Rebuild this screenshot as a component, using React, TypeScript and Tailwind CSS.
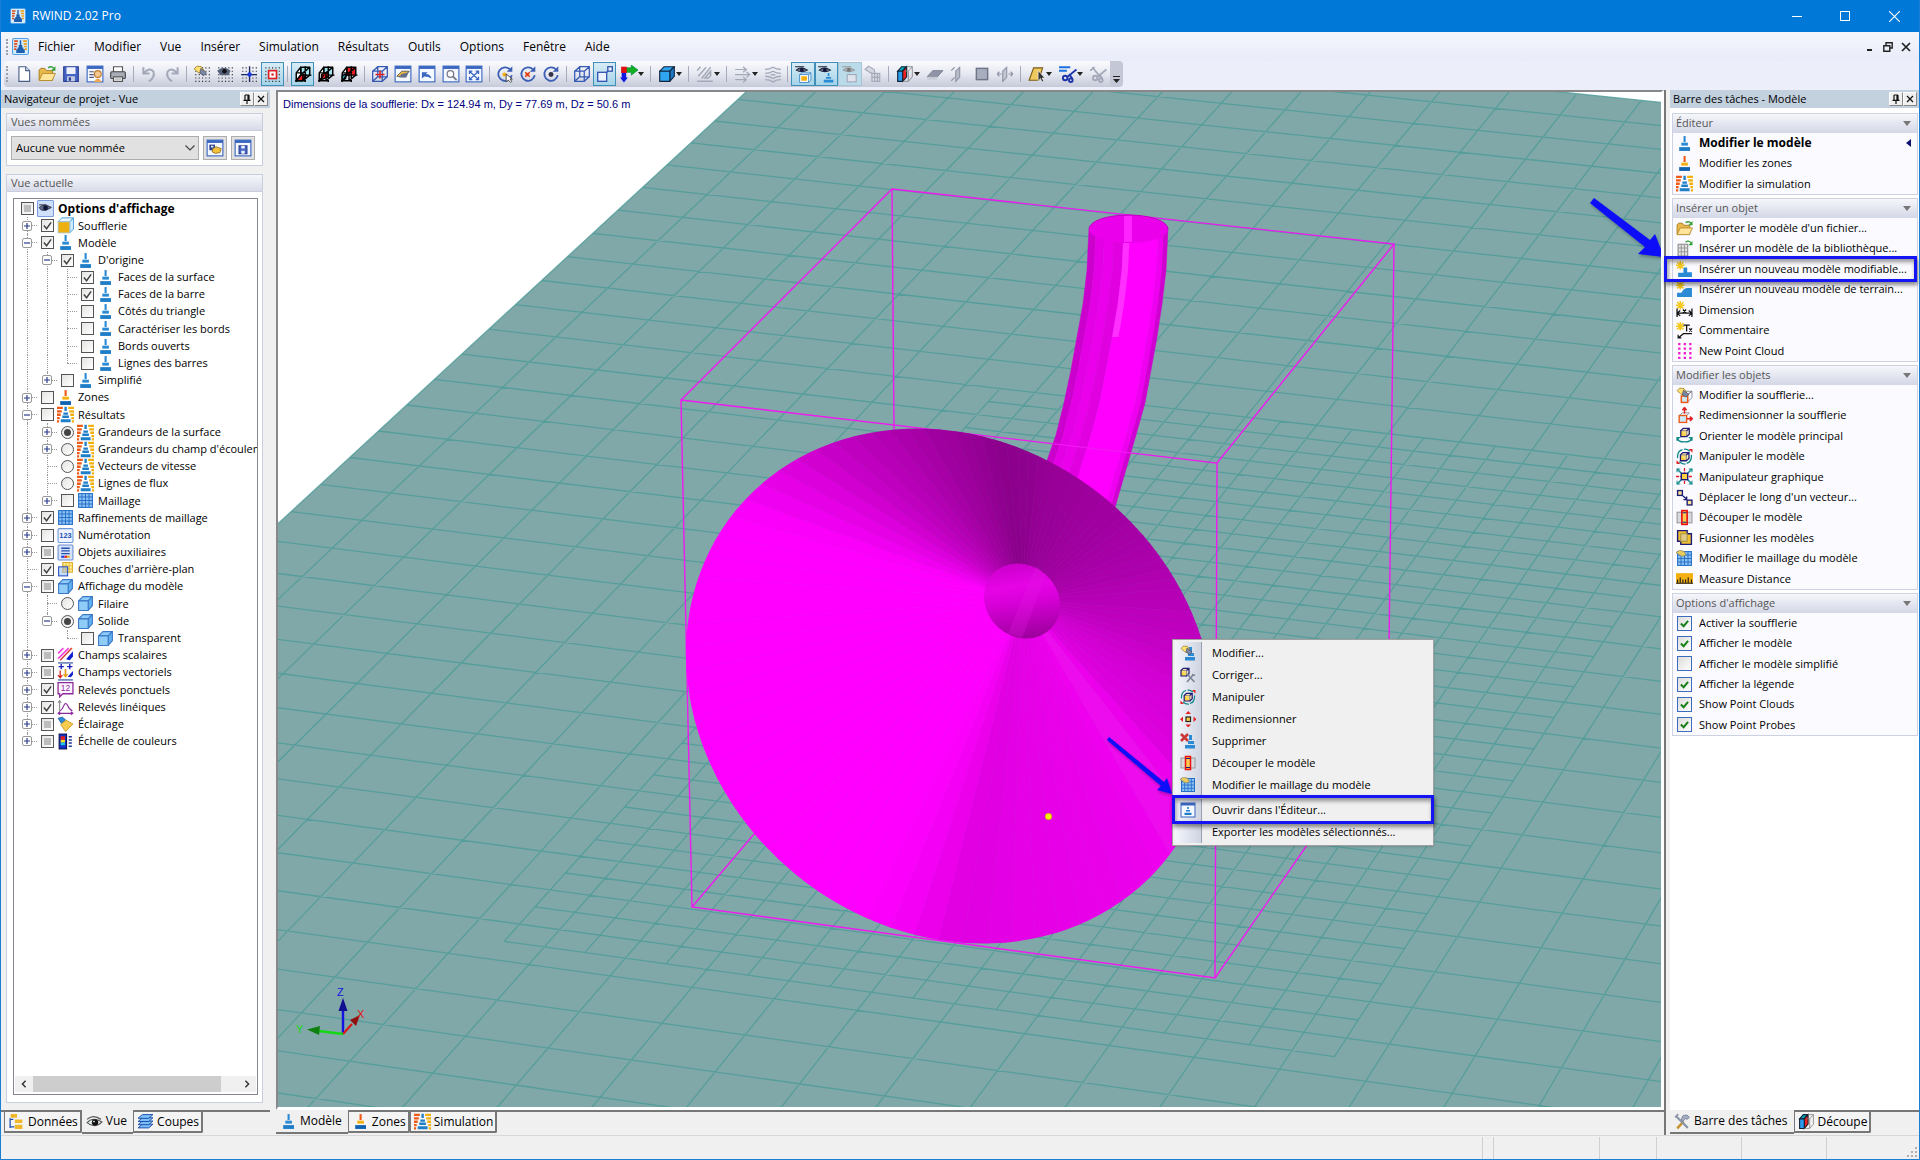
import { ReactNode } from "react";
import clsx from "clsx";

type State = "on" | "off" | "mixed";

type TreeItem = {
    level: number;
    toggle?: "+" | "-";
    radio?: boolean;
    state: State;
    icon: string;
    label: string;
};

/* ---------- icon building blocks, all on a 16 x 16 grid ---------- */

function Tower({ top = "#2a8ad4", mid = "#2a8ad4", base = "#1f7ec8" }) {
    return (
        <>
            <rect x="7.1" y="1" width="2" height="5.6" fill={top} />
            <path d="M5 10V7.200h6.200V10z" fill={mid} />
            <path d="M3 15v-3.600h10.200V15z" fill={base} />
        </>
    );
}

function Cube({ fill = "#8fcdf8", side = "#5fb0ec", line = "#3a78c8" }) {
    return (
        <g stroke={line} strokeWidth="1" strokeLinejoin="round">
            <path d="M1.5 5.5 5.5 1.5h9l-4 4z" fill={fill} />
            <path d="M10.5 5.5l4-4v8.5l-4 4.5z" fill={side} />
            <path d="M1.5 5.5h9v9h-9z" fill={fill} />
        </g>
    );
}

function Win({ children }: { children?: ReactNode }) {
    return (
        <>
            <rect x="1" y="1" width="14" height="14" fill="#f4f8ff" stroke="#3a66c0" />
            <rect x="1" y="1" width="14" height="2.5" fill="#3a66c0" />
            {children}
        </>
    );
}

function Dots() {
    return (
        <path
            d="M2 2.5h13M2 5.5h13M2 8.5h13M2 11.5h13M2 14.5h13"
            stroke="#333"
            strokeWidth="1"
            strokeDasharray="1 2"
        />
    );
}

function Hand() {
    return (
        <g strokeWidth=".6">
            <path d="M1 3.5 3.5 1l4 .5L10 5 7.5 8 4.5 6.5z" fill="#ffe070" stroke="#8a6a10" />
            <path d="M7 3l5 4-2.5 2.5L6 7z" fill="#7a88a8" stroke="#445" />
        </g>
    );
}

function Eye({ grey = false }) {
    return (
        <g>
            <path d="M1 1.500h8M2 4.500Q6 1 12 4.500q-5 3-10 0z" fill={grey ? "#a8aebb" : "#6b7590"} stroke={grey ? "#999" : "#223"} strokeWidth=".9" />
            <circle cx="7" cy="4.400" r="1.700" fill={grey ? "#777" : "#0c1440"} />
        </g>
    );
}

function Spark() {
    return (
        <path
            d="M4 0v8M0 4h8M1 1l6 6M7 1 1 7"
            stroke="#f4c81c"
            strokeWidth="1.4"
        />
    );
}

function Mesh() {
    return (
        <>
            <rect x="1.5" y="1.5" width="13" height="13" fill="#8cc0f4" stroke="#2470c8" />
            <path d="M4.700 1.500v13M8 1.500v13M11.300 1.500v13M1.500 4.700h13M1.500 8h13M1.500 11.300h13" stroke="#2470c8" strokeWidth=".9" />
        </>
    );
}

function WireCube({ line = "#3558b4" }) {
    return (
        <path
            d="M1.5 5.5h8.5v9H1.5zM6 1.5h8.5v9H6zM1.5 5.5l4.5-4M10 5.5l4.5-4M1.5 14.5l4.5-4M10 14.5l4.5-4"
            fill="none"
            stroke={line}
            strokeWidth="1.1"
        />
    );
}

function Rotor({ line = "#3c5fb4" }) {
    return (
        <>
            <path d="M12.5 4A6 6 0 1 0 14 9" fill="none" stroke={line} strokeWidth="1.6" />
            <path d="M14.5 1v5h-5z" fill={line} />
        </>
    );
}

function Box3({ part }: { part: "floor" | "middle" | "front" }) {
    return (
        <g stroke="#000" strokeWidth="1.3" strokeLinejoin="round">
            <path d="M6 2h8v7H6z" fill={part === "front" ? "#e81c1c" : "#9fe4ec"} />
            <path d="M2 7l4-5v7l-4 5z" fill="#fff" />
            {part === "floor" && <path d="M2 14 6 9h5l-3.500 5z" fill="#e81c1c" />}
            {part === "middle" && <path d="M4 8.500 10 6v4.500L4 13z" fill="#e81c1c" />}
            {part === "front" && <path d="M2 9.500 5 8v4l-3 2z" fill="#19a8b8" />}
            <path d="M2 7h6l6-5M8 7v7l6-5M1 14h9M6 9 1.500 15M10 1v14M14 9h1.500" fill="none" />
        </g>
    );
}

function Cut() {
    return (
        <>
            <path d="M1.5 5.5 5 1.5h4l-3.5 4z" fill="#0ab" stroke="#123" />
            <path d="M1.5 5.5h4.5v9H1.5z" fill="#2a9cf0" stroke="#123" />
            <path d="M6 5.5l3.5-4v9L6 14.5z" fill="#f02020" stroke="#123" />
            <path d="M9.5 1.5h5v9l-3.5 4H6M11 5.5v9M14.5 1.5l-3.5 4H8" fill="none" stroke="#888" strokeWidth=".8" />
        </>
    );
}

function Scissors({ line = "#1c34a8" }) {
    return (
        <g fill="none" stroke={line} strokeWidth="1.7">
            <path d="M15.500 4 7 11M9 8l3 4.500" />
            <circle cx="5.5" cy="11.500" r="2" />
            <circle cx="10.500" cy="13.500" r="1.600" />
        </g>
    );
}

function Bars() {
    return (
        <>
            <path d="M0 1.800h5.500M0 5h4.500M0 8.200h3.500M0 11.400h2.500M0 14.400h2" stroke="#f05a14" strokeWidth="2.2" />
            <path d="M10.500 1.800H16M11.500 5H16M12.500 8.200H16M13.500 11.400H16M14 14.400h2" stroke="#f4b010" strokeWidth="2.2" />
        </>
    );
}

function TinyCube({ x = 4, y = 4 }) {
    return (
        <g transform={`translate(${x} ${y})`} stroke="#1c1c78" strokeWidth="1.2">
            <path d="M0 2.5h5.5V8H0z" fill="#ffd040" />
            <path d="M0 2.5 2.3.3H8v5.500L5.500 8M5.500 2.500 8 .3" fill="#ffe890" fillOpacity=".6" />
        </g>
    );
}

const grey = "#a3a9b8";

const icons: Record<string, ReactNode> = {
    app: (
        <>
            <rect x=".5" y=".5" width="15" height="15" rx="1.500" fill="#d4ecfb" stroke="#4f9fe4" />
            <path d="M2 3h3.500M2 5.500h3M2 8h2.500M2 10.500h2" stroke="#e04818" strokeWidth="1.600" />
            <path d="M10.500 3H14M11 5.500h3M11.500 8H14M12 10.500h2" stroke="#f09c10" strokeWidth="1.600" />
            <path d="M7.300 2h1.400v4.500h1V9h1v1.500h1.300V14H4v-3.500h1.300V9h1V6.500h1z" fill="#1e5fae" />
        </>
    ),
    file: (
        <>
            <path d="M3.500 1.500h6l3.500 3.500v9.500H3.500z" fill="#fff" stroke="#4a5f88" />
            <path d="M9.500 1.500v3.500H13" fill="#dfe6f4" stroke="#4a5f88" />
        </>
    ),
    open: (
        <>
            <path d="M1 13.500V4.500l1.500-1.500h3.500L7.500 5H13v8.500z" fill="#e8b84c" stroke="#a57716" strokeWidth=".8" />
            <path d="M1 13.800 4 7.500h11.500l-3 6.300z" fill="#ffe49a" stroke="#b58a26" strokeWidth=".8" />
            <path d="M9 2.500Q12 .5 14 3" fill="none" stroke="#35a035" strokeWidth="1.300" />
            <path d="M15.500 1v4h-4z" fill="#35a035" />
        </>
    ),
    save: (
        <>
            <path d="M1.500 1.500h13v13h-13z" fill="#4565c4" stroke="#2b3f92" />
            <rect x="4" y="2" width="8" height="6" fill="#eef2fc" />
            <rect x="4.500" y="10" width="7" height="4.500" fill="#c3cbe4" />
            <rect x="6" y="11" width="2" height="3" fill="#2b3f92" />
        </>
    ),
    preview: (
        <Win>
            <path d="M3 6h4M3 8.500h4M3 11h4" stroke="#557" />
            <circle cx="10.500" cy="8" r="3" fill="#f4c890" stroke="#c07a30" />
            <path d="M7 15q3.500-6 7 0z" fill="#f0a850" />
        </Win>
    ),
    print: (
        <>
            <path d="M4 6V1.500h8V6" fill="#fff" stroke="#555" />
            <rect x="1.500" y="6" width="13" height="6" rx="1" fill="#a8adb6" stroke="#444" />
            <path d="M4 10.500h8v4H4z" fill="#fff" stroke="#555" />
            <path d="M5 12.500h6" stroke="#888" strokeWidth=".8" />
        </>
    ),
    undo: (
        <path d="M3 2v5.500h5.500M3.500 7Q9 1.500 12 6q1.500 5-4 8.500" fill="none" stroke={grey} strokeWidth="1.800" />
    ),
    redo: (
        <path d="M13 2v5.500H7.500M12.500 7Q7 1.500 4 6q-1.500 5 4 8.500" fill="none" stroke={grey} strokeWidth="1.800" />
    ),
    gridPen: (
        <>
            <Dots />
            <Hand />
        </>
    ),
    gridEye: (
        <>
            <Dots />
            <path d="M1 5Q7 0 13 5l-2 4H4z" fill="#55607a" />
            <circle cx="7.500" cy="5.500" r="2" fill="#111" />
        </>
    ),
    gridCross: (
        <>
            <Dots />
            <path d="M8.500 1v14M1 8.500h14" stroke="#1c2a60" strokeWidth="1.200" />
            <circle cx="8.500" cy="8.500" r="2" fill="#2038e0" />
        </>
    ),
    gridSnap: (
        <>
            <Dots />
            <rect x="5" y="5" width="7" height="7" fill="#fff" stroke="#e02020" strokeWidth="1.500" />
            <rect x="7.500" y="7.500" width="2" height="2" fill="#e02020" />
        </>
    ),
    boxA: <Box3 part="floor" />,
    boxB: <Box3 part="middle" />,
    boxC: <Box3 part="front" />,
    wireRed: (
        <>
            <WireCube />
            <path d="M4 8.500h8M8 5v7" stroke="#e02020" strokeWidth="1.400" />
        </>
    ),
    winPen: (
        <Win>
            <path d="M2.500 10l4.500-4.500h6.500l-4 5z" fill="#f4c040" stroke="#555" strokeWidth=".8" />
            <path d="M6.500 8l6.500-1.500-2 4.500H4.500z" fill="#66718c" />
        </Win>
    ),
    winBack: (
        <Win>
            <path d="M3.500 12V6.500h5L7 8q4 0 5 4-3-2-6.500-1.800z" fill="#3a66c0" />
        </Win>
    ),
    winZoom: (
        <Win>
            <circle cx="7.500" cy="8" r="2.900" fill="#fff" stroke="#778" strokeWidth="1.100" />
            <path d="M9.700 10.200l3.300 3.300" stroke="#778" strokeWidth="1.600" />
        </Win>
    ),
    winFit: (
        <Win>
            <path d="M4 5.500l8 7.500M12 5.500 4 13M4 8V5.500h2.500M9.500 5.500H12V8M12 10.500V13H9.500M6.500 13H4v-2.500" fill="none" stroke="#3a66c0" strokeWidth="1.200" />
        </Win>
    ),
    rotSel: (
        <>
            <Rotor />
            <circle cx="7.500" cy="8.500" r="1.800" fill="#f4b010" />
            <path d="M9 8v7l2-1.500 2 2 1-1-1.500-2h2z" fill="#fff" stroke="#222" strokeWidth=".7" />
        </>
    ),
    rotX: (
        <>
            <Rotor />
            <circle cx="7.500" cy="8.500" r="1.800" fill="#f4b010" />
            <path d="M5.500 6.500l4 4M9.500 6.500l-4 4" stroke="#e03020" strokeWidth="1.200" />
        </>
    ),
    rotEye: (
        <>
            <Rotor />
            <circle cx="8" cy="8.500" r="2.200" fill="#334" />
        </>
    ),
    wire: <WireCube />,
    cubeMove: (
        <g fill="#eaf3ff" stroke="#3558b4" strokeWidth="1.200">
            <rect x="1.500" y="6.500" width="8" height="8" />
            <path d="M9.500 6.500 12 4" />
            <rect x="10.500" y="1.500" width="4" height="4" />
        </g>
    ),
    axes: (
        <>
            <path d="M1.500 5h4v6H7l-3.500 4.500L0 11h1.500z" fill="#1018e0" />
            <path d="M5 2.500h5V0l6 4.500L10 9V6.500H5z" fill="#10b020" stroke="#084" strokeWidth=".6" />
            <rect x="1" y="1.500" width="5" height="5.500" fill="#e01010" />
        </>
    ),
    solidCube: <Cube fill="#2fa4f0" side="#1c78c8" line="#12243c" />,
    hatch: (
        <path d="M2 10 9 2M5 12 13 2M1 5l3-3.500M8 11.500l5-6v4l-2 2zM1 14.500h14" fill="none" stroke={grey} strokeWidth="1.300" />
    ),
    flows: (
        <path d="M1 4h10M8 1.500 11 4 8 6.500M1 8.500h13M11 6l3 2.500L11 11M1 13h10M8 10.500l3 2.500-3 2.500" fill="none" stroke={grey} strokeWidth="1.100" />
    ),
    waves: (
        <path d="M1 4q4 0 7-2 3 2 7 2M1 7.500q4 0 7-2 3 2 7 2M1 10q4 0 7 2 3-2 7-2M1 13q4 0 7 2 3-2 7-2M6 8.700h4" fill="none" stroke={grey} strokeWidth="1.200" />
    ),
    eyeBox: (
        <>
            <Eye />
            <path d="M5 8.500h8v7H5zM13 8.500l2-1.500v6.500l-2 2M5 8.500l2-1.500h8" fill="#fff" stroke="#3a86c8" strokeWidth=".8" />
            <rect x="6.500" y="10" width="5" height="4" fill="#f4b010" />
        </>
    ),
    eyeTower: (
        <>
            <Eye />
            <path d="M9.500 7h1.500v3H9.500zM8 10.700h4.500v1.500H8zM6 13h8.500v2.500H6z" fill="#2a8ad4" />
        </>
    ),
    eyeGrey: (
        <>
            <Eye grey />
            <rect x="5.500" y="8.500" width="8" height="6.500" fill="#dfe4ec" stroke={grey} />
        </>
    ),
    handGrey: (
        <g fill="#d4d8e2" stroke={grey}>
            <path d="M1 4 4 1l5 3 1 4-4-1z" />
            <rect x="7" y="7.500" width="7" height="7" />
            <path d="M9.500 7.500v7M12 7.500v7M7 11h7" />
        </g>
    ),
    cut: <Cut />,
    planeA: (
        <>
            <path d="M1 10.500 6 5h9l-5 5.500z" fill="#8f95a6" stroke="#777d90" strokeWidth=".8" />
            <path d="M1 10.500h9V13H1z" fill="#c6cad6" />
        </>
    ),
    planeB: <path d="M6 5.500 9.500 2v9L6 14.500zM2 5l3-3M2 14l3-3" fill="#b8bdca" stroke="#8f95a6" />,
    planeC: <rect x="3" y="3" width="10" height="10" fill="#a9aebf" stroke="#6f7588" strokeWidth="1.300" />,
    planeD: <path d="M6 5.500 9.500 2v9L6 14.500zM1 8h4M15 8h-4M1 8l2-2M1 8l2 2M15 8l-2-2M15 8l-2 2" fill="#c3c7d2" stroke="#8f95a6" />,
    sheet: (
        <>
            <path d="M1 13.500 5 2.500h8L9.500 13.500z" fill="#f0c860" stroke="#7a5c14" />
            <path d="M9 5v9l2-2 1.500 3 1.500-.8-1.500-2.700H15z" fill="#333" stroke="#fff" strokeWidth=".5" />
        </>
    ),
    cutLines: (
        <>
            <path d="M0 2h10M0 5.200h7" stroke="#1c70e0" strokeWidth="1.800" />
            <Scissors />
        </>
    ),
    cutGrey: (
        <>
            <path d="M3 2l9 11M1 5l4-3" stroke={grey} strokeWidth="1.500" />
            <Scissors line={grey} />
        </>
    ),
    model: <Tower />,
    zones: <Tower top="#f05a14" mid="#f4b010" base="#0f62b0" />,
    sim: (
        <>
            <Bars />
            <path d="M7 .800h2.200v4H7zM6 6h4.300v2.200H6zM5 9h6.200v2.400H5zM3.500 12.400h9.300V15.400H3.500z" fill="#1f7ec8" />
        </>
    ),
    eyeWin: (
        <>
            <rect x=".5" y=".5" width="15" height="15" rx="1" fill="#cfe0fb" stroke="#7c9ce0" />
            <path d="M2 4.500h7M2 7Q7 3 13.500 7 8 11 4 9.500z" fill="#66718c" stroke="#334" strokeWidth=".9" />
            <circle cx="8" cy="7.500" r="2.300" fill="#10183a" />
        </>
    ),
    tunnel: (
        <>
            <path d="M1 4.500 4.500.8h11L12 4.500z" fill="#eaf6ff" stroke="#4aa0dc" strokeWidth=".9" />
            <path d="M12 4.500 15.500.8v10.500L12 15z" fill="#d4ecfb" stroke="#4aa0dc" strokeWidth=".9" />
            <rect x="1" y="4.500" width="11" height="10.500" fill="#eeb010" stroke="#a8c8dc" strokeWidth=".8" />
        </>
    ),
    mesh: <Mesh />,
    num: (
        <>
            <rect x="1" y="1.500" width="14" height="13" rx="1" fill="#eef4ff" stroke="#6f96dc" />
            <text x="8" y="10.800" textAnchor="middle" fontSize="7" fontWeight="700" fontFamily="Liberation Sans, sans-serif" fill="#2450b0">
                123
            </text>
        </>
    ),
    aux: (
        <>
            <rect x="1" y="1" width="14" height="14" rx="1" fill="#d4e2fa" stroke="#6f8cd0" />
            <path d="M4 4h8M4 6.500h8M4 9h8" stroke="#2450b0" strokeWidth="1.200" />
            <path d="M4 12h3" stroke="#1040e0" strokeWidth="2" />
            <path d="M7 12h2.500" stroke="#e02020" strokeWidth="2" />
            <path d="M9.500 12H12" stroke="#f4b010" strokeWidth="2" />
        </>
    ),
    layers: (
        <>
            <rect x="5.500" y="1.500" width="9" height="9" fill="#fff0a0" stroke="#d8a820" />
            <path d="M8.500 1.500v9M11.500 1.500v9M5.500 4.500h9M5.500 7.500h9" stroke="#e8b830" strokeWidth=".8" />
            <rect x="1.500" y="5.500" width="8.500" height="8.500" fill="#8cb4f4" fillOpacity=".5" stroke="#2450c0" />
        </>
    ),
    cube: <Cube />,
    scalar: (
        <>
            <path d="M1 6 6 1M1 11 11 1" stroke="#f040e0" strokeWidth="1.500" />
            <path d="M3 12.500 14 1" stroke="#e04040" strokeWidth="1.500" />
            <path d="M8.500 11.500 15 4v5l-3 3.500z" fill="#1020d0" />
            <path d="M1 15h14" stroke="#1c3c90" />
        </>
    ),
    vector: (
        <>
            <path d="M4 0v5M1.500 2.500h5M12 0v5M9.500 2.500h5" stroke="#2020c0" strokeWidth="1.300" />
            <path d="M3 6v7M1 10.500 3 13l2-2.500M8 5v6" fill="none" stroke="#d02020" strokeWidth="1.200" />
            <path d="M8 5v7M6 9.500 8 12l2-2.500" fill="none" stroke="#e8a010" strokeWidth="1.300" />
            <path d="M10 12 15 6.500V10l-2 2.500z" fill="#1020d0" />
            <path d="M1 15h14" stroke="#1c3c90" />
        </>
    ),
    probe: (
        <>
            <path d="M1 1.500h14v10.500H5.500l-3 3v-3H1z" fill="#fdf4ff" stroke="#8c2a9c" strokeWidth="1.200" />
            <text x="8" y="9.800" textAnchor="middle" fontSize="8" fontFamily="Liberation Sans, sans-serif" fill="#8c2a9c">
                12
            </text>
        </>
    ),
    curve: (
        <>
            <path d="M2.500 12V2M1 3.500 2.500 1.500 4 3.500" fill="none" stroke="#888" />
            <path d="M3 11q2-1 3.500-5Q8 2.500 10 6q1.500 4 4.500 5" fill="none" stroke="#8c2a9c" strokeWidth="1.100" />
            <path d="M1 13.500h14M3 12l-2 1.500L3 15M13 12l2 1.500L13 15" fill="none" stroke="#8c2a9c" />
        </>
    ),
    light: (
        <>
            <path d="M1 2l3 5 4-3.500L5 1z" fill="#2a8ad4" stroke="#18508c" strokeWidth=".6" />
            <path d="M3.500 8 8.500 4 15 7.500 8 14.500z" fill="#f8cc50" stroke="#c89420" strokeWidth=".8" />
        </>
    ),
    scale: (
        <>
            <rect x="2" y="1" width="7" height="14" fill="#1030c8" />
            <rect x="3.500" y="3" width="4" height="3.500" fill="#e02020" />
            <rect x="3.500" y="6.500" width="4" height="2.500" fill="#f8e020" />
            <rect x="3.500" y="9" width="4" height="2.500" fill="#20c8e0" />
            <rect x="2" y="1" width="7" height="14" fill="none" stroke="#101050" />
            <path d="M11 3.500h3M11 6.500h3M11 9.500h3M11 12.500h3" stroke="#223a90" strokeWidth="1.400" />
        </>
    ),
    library: (
        <>
            <path d="M2 4h9v11H2z" fill="#e4e4e4" stroke="#888" />
            <path d="M2 7.500h9M2 11h9M5 4v11M8 4v11" stroke="#999" />
            <path d="M9 2Q12 0 14 2.500" fill="none" stroke="#35a035" strokeWidth="1.200" />
            <path d="M15.500 1v4h-4z" fill="#35a035" />
        </>
    ),
    newModel: (
        <>
            <path d="M7 6h3.500v4.500H15V15H2v-4h5z" fill="#2a8ad4" />
            <Spark />
        </>
    ),
    terrain: (
        <>
            <path d="M1 15v-4h4q2-4 5.500-4.500H15V15z" fill="#2a8ad4" />
            <Spark />
        </>
    ),
    dimension: (
        <>
            <Spark />
            <path d="M1 7v8M15 7v8M1 11.500h14M4 9l-3 2.500L4 14M12 9l3 2.500-3 2.500M6.500 8l3 3M9.500 8l-3 3" fill="none" stroke="#111" strokeWidth="1.200" />
        </>
    ),
    comment: (
        <>
            <Spark />
            <path d="M7 3h6M10 3v6M12.500 6l2.500 3M15 6l-2.500 3" stroke="#111" strokeWidth="1.200" />
            <path d="M15 11H7l-5 4M2 12v3h3" fill="none" stroke="#111" strokeWidth="1.100" />
        </>
    ),
    points: (
        <path d="M2 2h13M2 6.300h13M2 10.600h13M2 14.900h13" stroke="#f020d0" strokeWidth="2.200" strokeDasharray="2.200 3" />
    ),
    editTunnel: (
        <>
            <path d="M6 7h5v7H6zM9 4h6l-4 3zM11 7l4-3v6l-4 4" fill="#fff" stroke="#778" strokeWidth=".8" />
            <rect x="5" y="8.500" width="6" height="6" fill="#cde8f8" stroke="#f05a14" strokeWidth="1.400" />
            <Hand />
        </>
    ),
    sizeTunnel: (
        <>
            <rect x="3" y="8" width="7" height="6.500" fill="#cde8f8" stroke="#f05a14" strokeWidth="1.300" />
            <path d="M3 8l3-2.500h6.500L10 8" fill="none" stroke="#888" strokeWidth=".8" />
            <path d="M8 6V1M6 3l2-2.500L10 3M10 11h5.500M13 9l2.500 2-2.500 2" fill="none" stroke="#e02020" strokeWidth="1.400" />
        </>
    ),
    orient: (
        <>
            <TinyCube x={4.500} y={1} />
            <path d="M2 10q-1 4 6 4t6-4M12 10h3v3M1 13v-3h3" fill="none" stroke="#0f8a88" strokeWidth="1.300" />
        </>
    ),
    manip: (
        <>
            <path d="M6 1.500Q1 3 1.500 9.500M10 14.500Q15 13 14.500 6.500M3 13q3 2.500 6 2M13 3Q10 .5 7.500 1.200" fill="none" stroke="#0f8a88" strokeWidth="1.200" />
            <TinyCube x={4.200} y={4} />
            <path d="M12 1h3.500v3.500zM.5 11.500V15H4z" fill="#e02020" />
        </>
    ),
    gizmo: (
        <>
            <path d="M8 0v16M0 8h16" stroke="#e02020" strokeWidth="1.200" strokeDasharray="3 1" />
            <path d="M1 1l4 4M15 1l-4 4M1 15l4-4M15 15l-4-4" stroke="#0f8a88" strokeWidth="1.400" />
            <path d="M1 4V1h3M12 1h3v3M15 12v3h-3M4 15H1v-3" fill="none" stroke="#0f8a88" />
            <rect x="5" y="5" width="6" height="6" fill="#ffd040" stroke="#1c1c78" strokeWidth="1.300" />
        </>
    ),
    along: (
        <>
            <rect x="1.500" y="1.500" width="4.500" height="4.500" fill="#ffe890" stroke="#1c1c78" strokeWidth="1.300" />
            <rect x="10.500" y="10.500" width="4.500" height="4.500" fill="#ffe890" stroke="#1c1c78" strokeWidth="1.300" />
            <path d="M6.500 6.500l3.500 3M10 7v3H7" fill="none" stroke="#1c1c78" strokeWidth="1.300" />
        </>
    ),
    split: (
        <>
            <rect x="1" y="3" width="14" height="10" fill="#d8dade" stroke="#999" />
            <rect x="5.500" y="1.500" width="5" height="13" fill="#ffc850" stroke="#e81010" strokeWidth="1.500" />
            <path d="M6 3.500h4M6 12.500h4" stroke="#1c1c78" />
        </>
    ),
    merge: (
        <>
            <path d="M1.500 1.500h9v3h4v10h-10v-3h-3z" fill="#f0c030" stroke="#1c1c78" strokeWidth="1.300" />
            <rect x="4.500" y="4.500" width="6" height="7" fill="#e0cc88" stroke="#a89440" />
        </>
    ),
    meshPen: (
        <>
            <Mesh />
            <path d="M0 2.500 3.500 0 8 1.500 9.500 5 5.500 6z" fill="#e8cc60" stroke="#776" strokeWidth=".6" />
        </>
    ),
    ruler: (
        <>
            <rect x="0" y="3" width="16" height="10" fill="#f4b010" />
            <path d="M0 12.500h16M1.500 9v4M4 7v6M6.500 9v4M9 9v4M11.500 7v6M14.500 9v4" stroke="#222" strokeWidth="1.100" />
        </>
    ),
    handTower: (
        <>
            <path d="M9 2h3v5H9zM8 8h6v3H8zM5 12h10v3.500H5z" fill="#2a8ad4" />
            <Hand />
        </>
    ),
    repair: (
        <>
            <TinyCube x={1} y={1} />
            <path d="M7 15l6-7M8 8l6.500 7M7 7l2.500 2.500M12 7.500l3 1" stroke="#7d8698" strokeWidth="1.700" />
        </>
    ),
    resize: (
        <>
            <rect x="6" y="6" width="4.500" height="4.500" fill="#ffd040" stroke="#222" strokeWidth="1.200" />
            <path d="M8.200 0 11 3H5.500zM8.200 16.500 11 13.500H5.500zM0 8.200 3 5.500V11zM16.500 8.200 13.500 5.500V11z" fill="#e82020" />
        </>
    ),
    remove: (
        <>
            <path d="M9 2h3v5H9zM8 8h6v3H8zM5 12h10v3.500H5z" fill="#2a8ad4" />
            <path d="M1 1l7 7M8 1 1 8" stroke="#c83838" strokeWidth="2.600" />
        </>
    ),
    editor: (
        <Win>
            <path d="M7.200 5h1.600v2H7.200zM6 8h4v1.500H6zM4.500 10.800h7v2.200h-7z" fill="#1f7ec8" />
        </Win>
    ),
    data: (
        <>
            <path d="M2 5v9M2 6h3M2 13h4" fill="none" stroke="#2450b0" strokeWidth="1.200" />
            <path d="M2.500 1h6v3.500h-6zM6.500 6h7v3.500h-7zM6.500 11h7v4h-7z" fill="#f0b828" />
        </>
    ),
    view: (
        <>
            <path d="M1 9Q7 3 15 8.500 8 15 1 9z" fill="#e8f2f4" stroke="#555" />
            <path d="M1 6Q7 1 14 6" fill="none" stroke="#555" strokeWidth="1.200" />
            <circle cx="8.500" cy="8.800" r="3" fill="#111" />
            <circle cx="7.500" cy="8" r=".8" fill="#fff" />
        </>
    ),
    slices: (
        <g fill="#7cc0fa" stroke="#1c4ca8" strokeWidth=".9">
            <path d="M1 14 5 10.500h10L11 14z" />
            <path d="M1 11 5 7.500h10L11 11z" />
            <path d="M1 8 5 4.500h10L11 8z" />
            <path d="M1 5 5 1.500h10L11 5z" />
        </g>
    ),
    tools: (
        <>
            <path d="M3 14.500 9 8" stroke="#c8902c" strokeWidth="2.400" />
            <path d="M2 3q3 3 5 5l6 6" fill="none" stroke="#8793a8" strokeWidth="2" />
            <path d="M8 3q4-2.500 6.500 1l-2 2-2-1-2 3L7 6z" fill="#a4afc4" stroke="#66708a" strokeWidth=".7" />
            <path d="M1 4l3-3" stroke="#8793a8" strokeWidth="1.500" />
        </>
    ),
    winHand: (
        <Win>
            <path d="M3 5h5v5H3z" fill="#2b3f92" />
            <path d="M4.500 6h2v1.500h-2z" fill="#fff" />
            <path d="M6 8.500 9 7l4.500 1.500-1 3.500-4 .8-3-1.300z" fill="#f4c040" stroke="#8a6a10" strokeWidth=".7" />
        </Win>
    ),
    winSave: (
        <Win>
            <path d="M4.500 6h7v7h-7z" fill="#4565c4" stroke="#2b3f92" />
            <path d="M6.500 6h3v2.500h-3zM6.500 10.500h3V13h-3z" fill="#eef2fc" />
        </Win>
    ),
};

function Icon({ name, className = "size-4" }: { name: string; className?: string }) {
    return (
        <svg viewBox="0 0 16 16" className={clsx("shrink-0", className)} aria-hidden="true">
            {icons[name]}
        </svg>
    );
}

/* ---------- menu bar and toolbar ---------- */

const menus = ["Fichier", "Modifier", "Vue", "Insérer", "Simulation", "Résultats", "Outils", "Options", "Fenêtre", "Aide"];

// "!" pressed, "~" pressed but disabled, ">" has a drop-down arrow
const toolGroups = [
    { width: "w-[118px]", tools: ["file", "open", "save", "preview", "print"] },
    { width: "w-[46px]", tools: ["undo", "redo"] },
    { width: "w-[94px]", tools: ["gridPen", "gridEye", "gridCross", "!gridSnap"] },
    { width: "w-[70px]", tools: ["!boxA", "boxB", "boxC"] },
    { width: "w-[118px]", tools: ["wireRed", "winPen", "winBack", "winZoom", "winFit"] },
    { width: "w-[70px]", tools: ["rotSel", "rotX", "rotEye"] },
    { width: "w-[77px]", tools: ["wire", "!cubeMove", ">axes"] },
    { width: "w-[31px]", tools: [">solidCube"] },
    { width: "w-[31px]", tools: [">hatch"] },
    { width: "w-[54px]", tools: [">flows", "waves"] },
    { width: "w-[94px]", tools: ["!eyeBox", "!eyeTower", "~eyeGrey", "handGrey"] },
    { width: "w-[125px]", tools: [">cut", "planeA", "planeB", "planeC", "planeD"] },
    { width: "w-[86px]", tools: [">sheet", ">cutLines", "cutGrey"] },
];

function ToolButton({ tool }: { tool: string }) {
    const mark = /^[!~>]/.test(tool) ? tool[0] : "";
    const name = tool.replace(/^[!~>]/, "");

    return (
        <button
            type="button"
            aria-label={name}
            className={clsx(
                "flex h-6 items-center justify-center border",
                mark === ">" ? "w-[31px] shrink-0" : "flex-1",
                mark === "!" && "border-[#3f8fb8] bg-linear-to-b from-[#d8edf6] to-[#a4d3e8]",
                mark === "~" && "border-[#a8c4d4] bg-[#b9dbea]",
                mark !== "!" && mark !== "~" && "border-transparent",
            )}
        >
            <Icon name={name} className="size-[18px]" />
            {mark === ">" && (
                <svg viewBox="0 0 6 4" className="h-1 w-1.5 shrink-0" aria-hidden="true">
                    <path d="M0 0h6L3 4z" fill="#222" />
                </svg>
            )}
        </button>
    );
}

function Grip() {
    return <span className="h-4 w-0.5 border-l-2 border-dotted border-[#9aa0b0]" />;
}

function TitleBar() {
    return (
        <header className="flex h-8 shrink-0 items-center bg-[#0078d7] pl-[9px] text-white">
            <Icon name="app" className="size-4" />
            <h1 className="ml-1.5 flex-1 text-[12px]">RWIND 2.02 Pro</h1>
            <button type="button" aria-label="Réduire" className="flex h-full w-12 items-center justify-center">
                <svg viewBox="0 0 10 10" className="size-2.5">
                    <path d="M0 5.500h10" stroke="#fff" />
                </svg>
            </button>
            <button type="button" aria-label="Agrandir" className="flex h-full w-12 items-center justify-center">
                <svg viewBox="0 0 10 10" className="size-2.5">
                    <rect x=".5" y=".5" width="9" height="9" fill="none" stroke="#fff" />
                </svg>
            </button>
            <button type="button" aria-label="Fermer" className="flex h-full w-[50px] items-center justify-center">
                <svg viewBox="0 0 10 10" className="size-[11px]">
                    <path d="M0 0l10 10M10 0 0 10" stroke="#fff" />
                </svg>
            </button>
        </header>
    );
}

function MenuBar() {
    return (
        <nav className="flex h-[29px] shrink-0 items-center bg-linear-to-b from-[#f4f6fd] to-[#e9ecf9] pl-[5px]">
            <Grip />
            <Icon name="app" className="ml-1 size-[17px]" />
            <div className="flex flex-1 gap-px">
                {menus.map((menu) => (
                    <button key={menu} type="button" className="px-[9px] text-[12px]">
                        {menu}
                    </button>
                ))}
            </div>
            <div className="flex gap-2 pr-2">
                <button type="button" aria-label="Réduire la vue">
                    <svg viewBox="0 0 10 10" className="size-2.5">
                        <path d="M2 8h5" stroke="#222" strokeWidth="2" />
                    </svg>
                </button>
                <button type="button" aria-label="Restaurer la vue">
                    <svg viewBox="0 0 10 10" className="size-2.5">
                        <path d="M3 3V.8h6.200V6H7M.8 3.800h6v5.400h-6z" fill="none" stroke="#222" strokeWidth="1.400" />
                    </svg>
                </button>
                <button type="button" aria-label="Fermer la vue">
                    <svg viewBox="0 0 10 10" className="size-2.5">
                        <path d="M1 1l8 8M9 1 1 9" stroke="#222" strokeWidth="1.700" />
                    </svg>
                </button>
            </div>
        </nav>
    );
}

function Toolbar() {
    return (
        <div className="flex h-[29px] shrink-0 items-start bg-[#eceefa] pl-[3px]">
            <div className="flex h-[26px] items-center rounded-l-sm bg-linear-to-b from-[#fbfbfe] via-[#e6e8f1] to-[#c6cad9] pl-0.5">
                <Grip />
                <div className="ml-1 flex">
                    {toolGroups.map((group, i) => (
                        <div key={group.tools[0]} className="flex">
                            {i > 0 && (
                                <span className="my-1 flex w-[7px] justify-center">
                                    <span className="w-px bg-[#a6abbc]" />
                                </span>
                            )}
                            <div className={clsx("flex", group.width)}>
                                {group.tools.map((tool) => (
                                    <ToolButton key={tool} tool={tool} />
                                ))}
                            </div>
                        </div>
                    ))}
                </div>
            </div>
            <button
                type="button"
                aria-label="Autres commandes"
                className="flex h-[26px] w-[13px] items-end justify-center rounded-r-sm bg-[#c3c7d6] pb-1"
            >
                <svg viewBox="0 0 7 7" className="size-[7px]">
                    <path d="M0 .5h7" stroke="#222" />
                    <path d="M0 3h7L3.500 7z" fill="#222" />
                </svg>
            </button>
        </div>
    );
}

/* ---------- shared panel parts ---------- */

function DockHeader({ title }: { title: string }) {
    return (
        <div className="flex h-[18px] shrink-0 items-center bg-[#c3d0de] pr-0.5 pl-[3px] text-[11px]">
            <h2 className="flex-1">{title}</h2>
            <button type="button" aria-label="Épingler" className="flex size-[14px] items-center justify-center border border-t-white border-r-[#888] border-b-[#888] border-l-white bg-[#f0f0f0]">
                <svg viewBox="0 0 10 10" className="size-2.5">
                    <path d="M3 1v5M7 1v5M6 1v5M3 1h4M1.500 6.300h7M5 6.500V10" fill="none" stroke="#111" strokeWidth="1.200" />
                </svg>
            </button>
            <button type="button" aria-label="Fermer" className="flex size-[14px] items-center justify-center border border-t-white border-r-[#888] border-b-[#888] border-l-white bg-[#f0f0f0]">
                <svg viewBox="0 0 8 8" className="size-2">
                    <path d="M1 1l6 6M7 1 1 7" stroke="#111" strokeWidth="1.200" />
                </svg>
            </button>
        </div>
    );
}

function CheckBox({ id, state, radio, name }: { id: string; state: State; radio?: boolean; name?: string }) {
    return (
        <span className="grid place-items-center">
            <input
                id={id}
                name={name}
                type={radio ? "radio" : "checkbox"}
                defaultChecked={state === "on"}
                ref={(el) => {
                    if (el) el.indeterminate = state === "mixed";
                }}
                className={clsx(
                    "peer size-[13px] appearance-none border border-[#555] bg-linear-to-br from-[#e4e4e2] to-white [grid-area:1/1]",
                    radio && "rounded-full",
                )}
            />
            {radio ? (
                <span className="pointer-events-none hidden size-[7px] rounded-full bg-[#444] [grid-area:1/1] peer-checked:block" />
            ) : (
                <>
                    <svg viewBox="0 0 10 10" className="pointer-events-none hidden size-[9px] [grid-area:1/1] peer-checked:block">
                        <path d="M1 5l3 3.500L9 1.500" fill="none" stroke="#444" strokeWidth="1.700" />
                    </svg>
                    <span className="pointer-events-none hidden size-[7px] bg-[#bdbdbd] [grid-area:1/1] peer-indeterminate:block" />
                </>
            )}
        </span>
    );
}

function Tab({ icon, label, active }: { icon: string; label: string; active?: boolean }) {
    return (
        <button
            type="button"
            role="tab"
            aria-selected={!!active}
            className={clsx(
                "flex items-center gap-[3px] border-[#777] text-[12px] whitespace-nowrap",
                active
                    ? "-mt-0.5 h-6 border-b-2 bg-[#f0f0f0] pr-1.5 pl-1"
                    : "h-[21px] rounded-br-xs border-r-2 border-b-2 border-l bg-[#f4f4f4] pr-0.5 pl-[3px]",
            )}
        >
            <Icon name={icon} className="size-[17px]" />
            {label}
        </button>
    );
}

/* ---------- left dock ---------- */

const tree: TreeItem[] = [
    { level: 0, state: "mixed", icon: "eyeWin", label: "Options d'affichage" },
    { level: 1, toggle: "+", state: "on", icon: "tunnel", label: "Soufflerie" },
    { level: 1, toggle: "-", state: "on", icon: "model", label: "Modèle" },
    { level: 2, toggle: "-", state: "on", icon: "model", label: "D'origine" },
    { level: 3, state: "on", icon: "model", label: "Faces de la surface" },
    { level: 3, state: "on", icon: "model", label: "Faces de la barre" },
    { level: 3, state: "off", icon: "model", label: "Côtés du triangle" },
    { level: 3, state: "off", icon: "model", label: "Caractériser les bords" },
    { level: 3, state: "off", icon: "model", label: "Bords ouverts" },
    { level: 3, state: "off", icon: "model", label: "Lignes des barres" },
    { level: 2, toggle: "+", state: "off", icon: "model", label: "Simplifié" },
    { level: 1, toggle: "+", state: "off", icon: "zones", label: "Zones" },
    { level: 1, toggle: "-", state: "off", icon: "sim", label: "Résultats" },
    { level: 2, toggle: "+", radio: true, state: "on", icon: "sim", label: "Grandeurs de la surface" },
    { level: 2, toggle: "+", radio: true, state: "off", icon: "sim", label: "Grandeurs du champ d'écoulement" },
    { level: 2, radio: true, state: "off", icon: "sim", label: "Vecteurs de vitesse" },
    { level: 2, radio: true, state: "off", icon: "sim", label: "Lignes de flux" },
    { level: 2, toggle: "+", state: "off", icon: "mesh", label: "Maillage" },
    { level: 1, toggle: "+", state: "on", icon: "mesh", label: "Raffinements de maillage" },
    { level: 1, toggle: "+", state: "off", icon: "num", label: "Numérotation" },
    { level: 1, toggle: "+", state: "mixed", icon: "aux", label: "Objets auxiliaires" },
    { level: 1, state: "on", icon: "layers", label: "Couches d'arrière-plan" },
    { level: 1, toggle: "-", state: "mixed", icon: "cube", label: "Affichage du modèle" },
    { level: 2, radio: true, state: "off", icon: "cube", label: "Filaire" },
    { level: 2, toggle: "-", radio: true, state: "on", icon: "cube", label: "Solide" },
    { level: 3, state: "off", icon: "cube", label: "Transparent" },
    { level: 1, toggle: "+", state: "mixed", icon: "scalar", label: "Champs scalaires" },
    { level: 1, toggle: "+", state: "mixed", icon: "vector", label: "Champs vectoriels" },
    { level: 1, toggle: "+", state: "on", icon: "probe", label: "Relevés ponctuels" },
    { level: 1, toggle: "+", state: "on", icon: "curve", label: "Relevés linéiques" },
    { level: 1, toggle: "+", state: "mixed", icon: "light", label: "Éclairage" },
    { level: 1, toggle: "+", state: "mixed", icon: "scale", label: "Échelle de couleurs" },
];

// true when another item of this level follows before the branch closes
function continues(index: number, level: number) {
    for (let i = index + 1; i < tree.length; i++) {
        if (tree[i].level < level) return false;
        if (tree[i].level === level) return true;
    }
    return false;
}

function TreeRow({ item, index }: { item: TreeItem; index: number }) {
    const id = `tree-${index}`;
    const group = item.icon === "cube" ? "rendu" : "resultat";

    return (
        <li className="flex min-h-0 items-center whitespace-nowrap">
            {Array.from({ length: item.level }, (_, i) => i + 1).map((level) => {
                const own = level === item.level;
                const more = continues(index, level);
                return (
                    <span key={level} className="grid h-full w-5 shrink-0 place-items-center">
                        {(own || more) && (
                            <span
                                className={clsx(
                                    "w-px self-start border-l border-dotted border-[#999] [grid-area:1/1]",
                                    more ? "h-full" : "h-1/2",
                                )}
                            />
                        )}
                        {own && (
                            <span className="w-2.5 justify-self-end border-t border-dotted border-[#999] [grid-area:1/1]" />
                        )}
                        {own && item.toggle && (
                            <button
                                type="button"
                                aria-label={item.toggle === "+" ? "Développer" : "Réduire"}
                                className="size-[10px] rounded-xs border border-[#999] bg-white [grid-area:1/1]"
                            >
                                <svg viewBox="0 0 8 8" className="size-2">
                                    <path d={item.toggle === "+" ? "M1 4h6M4 1v6" : "M1 4h6"} stroke="#2a3c8c" strokeWidth="1.200" />
                                </svg>
                            </button>
                        )}
                    </span>
                );
            })}
            <span className="flex w-5 shrink-0 justify-center">
                <CheckBox id={id} state={item.state} radio={item.radio} name={item.radio ? group : undefined} />
            </span>
            <Icon name={item.icon} className="size-[17px]" />
            <label htmlFor={id} className={clsx("pl-1", item.level === 0 && "text-[12px] font-bold")}>
                {item.label}
            </label>
        </li>
    );
}

function Navigator() {
    return (
        <aside className="flex w-[269px] shrink-0 flex-col">
            <DockHeader title="Navigateur de projet - Vue" />
            <div className="flex min-h-0 flex-1 flex-col gap-2 pt-[5px] pr-[7px] pb-[7px] pl-[5px] text-[11px]">
                <section className="border border-[#c8cede] bg-white">
                    <h3 className="h-[17px] border-b border-[#c8cede] bg-linear-to-b from-[#f6f7fb] to-[#d8dbe8] pl-1 leading-4 text-[#555]">
                        Vues nommées
                    </h3>
                    <div className="flex items-center gap-1 px-1 py-[5px]">
                        <div className="grid flex-1 items-center">
                            <select
                                aria-label="Vues nommées"
                                className="h-6 appearance-none border border-[#adadad] bg-[#e1e1e1] pl-1 text-[11px] [grid-area:1/1]"
                            >
                                <option>Aucune vue nommée</option>
                            </select>
                            <svg viewBox="0 0 10 6" className="pointer-events-none mr-1 h-1.5 w-2.5 justify-self-end [grid-area:1/1]">
                                <path d="M.5.5 5 5 9.500.5" fill="none" stroke="#444" strokeWidth="1.200" />
                            </svg>
                        </div>
                        <button type="button" aria-label="Gérer les vues" className="flex size-6 items-center justify-center border border-[#adadad] bg-[#e1e1e1]">
                            <Icon name="winHand" className="size-[18px]" />
                        </button>
                        <button type="button" aria-label="Enregistrer la vue" className="mr-[3px] flex size-6 items-center justify-center border border-[#adadad] bg-[#e1e1e1]">
                            <Icon name="winSave" className="size-[18px]" />
                        </button>
                    </div>
                </section>
                <section className="flex min-h-0 flex-1 flex-col border border-[#c8cede] bg-white">
                    <h3 className="h-[17px] shrink-0 border-b border-[#c8cede] bg-linear-to-b from-[#f6f7fb] to-[#d8dbe8] pl-1 leading-4 text-[#555]">
                        Vue actuelle
                    </h3>
                    <div className="mt-1.5 mr-1 mb-[7px] ml-1.5 flex min-h-0 flex-1 flex-col border border-[#828790]">
                        <div className="min-h-0 flex-1 overflow-hidden pt-px pl-[3px]">
                            <ul className="grid h-[550px] auto-rows-fr">
                                {tree.map((item, i) => (
                                    <TreeRow key={i} item={item} index={i} />
                                ))}
                            </ul>
                        </div>
                        <div className="mx-px mb-0.5 flex h-4 shrink-0 items-stretch bg-[#f0f0f0]">
                            <button type="button" aria-label="Défiler à gauche" className="flex w-[18px] items-center justify-center">
                                <svg viewBox="0 0 6 10" className="h-2 w-1.5">
                                    <path d="M5 1 1 5l4 4" fill="none" stroke="#333" strokeWidth="1.800" />
                                </svg>
                            </button>
                            <div className="flex flex-1">
                                <span className="w-11/12 bg-[#cdcdcd]" />
                            </div>
                            <button type="button" aria-label="Défiler à droite" className="flex w-[18px] items-center justify-center">
                                <svg viewBox="0 0 6 10" className="h-2 w-1.5">
                                    <path d="M1 1l4 4-4 4" fill="none" stroke="#333" strokeWidth="1.800" />
                                </svg>
                            </button>
                        </div>
                    </div>
                </section>
            </div>
            <div role="tablist" className="flex h-[25px] shrink-0 items-start border-t-2 border-[#777] pl-[3px]">
                <Tab icon="data" label="Données" />
                <Tab icon="view" label="Vue" active />
                <Tab icon="slices" label="Coupes" />
            </div>
        </aside>
    );
}

/* ---------- 3D scene ---------- */

type Point = [number, number];

// vanishing points of the two ground directions
const VA: Point = [-26600, -2819];
const VB: Point = [3764, -2692];

function ground(j: number, k: number): Point {
    const px = 732.7 + 71.3 * j;
    const qy = (189.3 + 23.81 * k) / (1 - 0.00807 * k);
    const ax = px - VB[0];
    const ay = 170 - VB[1];
    const bx = 660 - VA[0];
    const by = qy - VA[1];
    const s = ((VA[0] - VB[0]) * by - (VA[1] - VB[1]) * bx) / (ax * by - ay * bx);
    return [VB[0] + s * ax, VB[1] + s * ay];
}

const toPoints = (pts: Point[]) => pts.map((p) => p.map((n) => n.toFixed(1)).join(",")).join(" ");

function segment(a: Point, b: Point) {
    return `M${a[0].toFixed(1)} ${a[1].toFixed(1)}L${b[0].toFixed(1)} ${b[1].toFixed(1)}`;
}

function gridPath() {
    let d = "";
    for (let k = -8; k <= 36; k++) d += segment(ground(-1, k), ground(26, k));
    for (let j = -1; j <= 26; j++) d += segment(ground(j, -8), ground(j, 36));
    // refined zone around the model
    for (let k = 6.5; k <= 24.5; k++) d += segment(ground(6.5, k), ground(16.5, k));
    for (let j = 6.5; j <= 16.5; j++) d += segment(ground(j, 6), ground(j, 24.5));
    return d;
}

// [angle in degrees, red/blue level] around the dish
const shades: Point[] = [
    [0, 184], [13, 192], [28, 208], [46, 222], [50, 236], [56, 238], [62, 238], [75, 233],
    [96, 227], [101, 223], [107, 238], [113, 250], [119, 255], [196, 255], [207, 228],
    [219, 196], [229, 180], [238, 166], [250, 152], [262, 140], [272, 143], [285, 152],
    [315, 160], [345, 172], [360, 184],
];

function shade(angle: number) {
    const i = shades.findIndex((s) => s[0] > angle);
    const [a0, v0] = shades[i - 1];
    const [a1, v1] = shades[i];
    return Math.round(v0 + ((v1 - v0) * (angle - a0)) / (a1 - a0));
}

const apex: Point = [1023, 600];

function ray(angle: number): Point {
    const t = (angle * Math.PI) / 180;
    return [apex[0] + 500 * Math.cos(t), apex[1] + 500 * Math.sin(t)];
}

const facets = Array.from({ length: 90 }, (_, i) => {
    const v = shade(i * 4 + 2);
    const g = i * 4 > 48 && i * 4 < 60 ? 12 : 0;
    return { points: toPoints([apex, ray(i * 4), ray(i * 4 + 4)]), fill: `rgb(${v},${g},${v})` };
});

const pipeLeft: Point[] = [[1089, 228], [1087, 270], [1083, 304], [1077, 337], [1071, 370], [1064, 403], [1056, 435], [1036, 492]];
const pipeRight: Point[] = [[1168, 228], [1166, 270], [1162, 304], [1157, 337], [1151, 370], [1145, 403], [1136, 435], [1107, 535]];

const pipeStrips: [number, number, string][] = [
    [0, 0.09, "#cc00cc"],
    [0.09, 0.2, "#e400e4"],
    [0.2, 0.32, "#ea00ea"],
    [0.32, 0.44, "#e000e0"],
    [0.44, 0.88, "#ff00ff"],
    [0.88, 0.95, "#f000f0"],
    [0.95, 1, "#d000d0"],
];

function strip(f0: number, f1: number, rows = pipeLeft.length) {
    const at = (i: number, f: number): Point => [
        pipeLeft[i][0] + (pipeRight[i][0] - pipeLeft[i][0]) * f,
        pipeLeft[i][1] + (pipeRight[i][1] - pipeLeft[i][1]) * f,
    ];
    const idx = Array.from({ length: rows }, (_, i) => i);
    return toPoints([...idx.map((i) => at(i, f0)), ...idx.reverse().map((i) => at(i, f1))]);
}

function Scene() {
    return (
        <svg
            viewBox="278 92 1384 1015"
            preserveAspectRatio="xMinYMin slice"
            className="min-h-0 w-full flex-1"
            role="img"
            aria-label="Modèle dans la soufflerie"
        >
            <defs>
                <clipPath id="dish">
                    <ellipse cx="950" cy="686" rx="277" ry="243.6" transform="rotate(39.3 950 686)" />
                </clipPath>
                <linearGradient id="ball" x1="0.1" y1="0.2" x2="0.9" y2="0.8">
                    <stop offset="0" stopColor="#cc00cc" />
                    <stop offset="0.3" stopColor="#e604e6" />
                    <stop offset="0.5" stopColor="#d800d8" />
                    <stop offset="0.7" stopColor="#c000c0" />
                    <stop offset="1" stopColor="#9c009c" />
                </linearGradient>
                <filter id="drop" x="-20%" y="-20%" width="150%" height="150%">
                    <feDropShadow dx="1" dy="2" stdDeviation="1.5" floodOpacity="0.3" />
                </filter>
            </defs>

            <polygon points={toPoints([ground(-1, -8), ground(26, -8), ground(26, 36), ground(-1, 36)])} fill="#80a8a8" />
            <path d={gridPath()} fill="none" stroke="#4b9b98" strokeWidth="1.3" opacity="0.8" />

            <g fill="none" stroke="#f018f0" strokeWidth="1.4">
                <path d="M681 400 892 189 1394 244 1217 463" />
                <path d="M892 189 896 667M1394 244 1388 728M692 907 896 667 1388 728 1215 978" />
            </g>

            {pipeStrips.map(([f0, f1, fill]) => (
                <polygon key={f0} points={strip(f0, f1)} fill={fill} stroke={fill} strokeWidth="0.5" />
            ))}
            <polygon points={strip(0.44, 0.52, 4)} fill="#ff30ff" />
            <ellipse cx="1128.500" cy="229" rx="39.500" ry="14" fill="#ea00ea" />
            <path d="M1089 229a39.500 14 0 0 1 79 0" fill="none" stroke="#c000c0" />
            <path d="M1124 216h8v26h-8z" fill="#ff24ff" />

            <path d="M681 400 1217 463 1215 978 692 907z" fill="none" stroke="#f018f0" strokeWidth="1.4" />

            <g clipPath="url(#dish)">
                {facets.map((facet) => (
                    <polygon key={facet.points} points={facet.points} fill={facet.fill} stroke={facet.fill} strokeWidth="0.6" />
                ))}
            </g>
            <ellipse cx="1022" cy="601" rx="40" ry="35.500" transform="rotate(42 1022 601)" fill="url(#ball)" />
            <path d="M1008 633 1036 566 1046 575 1022 638z" fill="#e018e0" opacity="0.3" />

            <circle cx="1048.500" cy="816.500" r="3.300" fill="#f4f400" stroke="#b8a000" strokeWidth="0.6" />

            <g fill="#0a0af8" filter="url(#drop)">
                <path d="M1109 737 1164 782 1167 778 1172 794 1157 790 1161 786 1107 740z" />
                <path d="M1594 198 1650 240 1655 234 1664 257 1638 254 1645 247 1590 203z" />
            </g>

            <g fontFamily="Liberation Sans, sans-serif" fontSize="11">
                <path d="M343 1034v-24" stroke="#1414e0" strokeWidth="2.400" />
                <path d="M343 998l4.500 13h-9z" fill="#101090" />
                <path d="M343 1034l9-10" stroke="#e01414" strokeWidth="2" />
                <path d="M360 1015l-4 11-6-6z" fill="#901010" />
                <path d="M343 1034l-24-3" stroke="#14d814" strokeWidth="2.400" />
                <path d="M307 1029.500l13-3.500-1 9z" fill="#108010" />
                <text x="337" y="996" fill="#1414e0">
                    Z
                </text>
                <text x="357" y="1018" fill="#e01414">
                    X
                </text>
                <text x="296" y="1033" fill="#14d814">
                    Y
                </text>
            </g>
        </svg>
    );
}

const contextItems = [
    { icon: "handTower", label: "Modifier..." },
    { icon: "repair", label: "Corriger..." },
    { icon: "manip", label: "Manipuler" },
    { icon: "resize", label: "Redimensionner" },
    { icon: "remove", label: "Supprimer" },
    { icon: "split", label: "Découper le modèle" },
    { icon: "meshPen", label: "Modifier le maillage du modèle" },
    { icon: "editor", label: "Ouvrir dans l'Éditeur...", framed: true },
    { icon: "", label: "Exporter les modèles sélectionnés..." },
];

function Frame({ className }: { className: string }) {
    return (
        <span
            className={clsx(
                "pointer-events-none absolute z-10 border-3 border-[#1414f4] shadow-[1px_3px_4px_rgba(0,0,0,0.45),inset_1px_3px_4px_rgba(0,0,0,0.4)]",
                className,
            )}
        />
    );
}

function ContextMenu() {
    return (
        <ul role="menu" className="absolute top-[547px] left-[894px] w-[262px] border border-[#a0a0a0] bg-[#f0f0f0] p-0.5 text-[11px] shadow-sm">
            {contextItems.map((item) => (
                <li key={item.label} role="none" className={clsx("relative", item.framed && "border-t-3 border-[#f0f0f0]")}>
                    <button type="button" role="menuitem" className="flex h-[22px] w-full items-center gap-2.5 text-left">
                        <span className="flex h-full w-[27px] items-center justify-center border-r border-[#9aa0b4] bg-linear-to-r from-[#f4f6fb] to-[#cfd4e2]">
                            {item.icon && <Icon name={item.icon} />}
                        </span>
                        {item.label}
                    </button>
                    {item.framed && <Frame className="-inset-x-[3px] -top-1 -bottom-[3px]" />}
                </li>
            ))}
        </ul>
    );
}

function Viewport() {
    return (
        <main className="ml-[6px] flex min-w-0 flex-1 flex-col">
            <div className="relative flex min-h-0 flex-1 flex-col border-t-2 border-r-3 border-b-3 border-l-2 border-t-[#888] border-r-white border-b-white border-l-[#888] bg-white">
                <p className="absolute top-1 left-[5px] font-['Liberation_Sans',Arial,sans-serif] text-[11px] text-[#000080]">
                    Dimensions de la soufflerie: Dx = 124.94 m, Dy = 77.69 m, Dz = 50.6 m
                </p>
                <Scene />
                <ContextMenu />
            </div>
            <div role="tablist" className="flex h-[25px] shrink-0 items-start border-t-2 border-[#777]">
                <Tab icon="model" label="Modèle" active />
                <Tab icon="zones" label="Zones" />
                <Tab icon="sim" label="Simulation" />
            </div>
        </main>
    );
}

/* ---------- right dock ---------- */

const taskGroups = [
    {
        title: "Éditeur",
        height: "h-[61px]",
        items: [
            { icon: "model", label: "Modifier le modèle", current: true },
            { icon: "zones", label: "Modifier les zones" },
            { icon: "sim", label: "Modifier la simulation" },
        ],
    },
    {
        title: "Insérer un objet",
        height: "h-[143px]",
        items: [
            { icon: "open", label: "Importer le modèle d'un fichier..." },
            { icon: "library", label: "Insérer un modèle de la bibliothèque..." },
            { icon: "newModel", label: "Insérer un nouveau modèle modifiable...", framed: true },
            { icon: "terrain", label: "Insérer un nouveau modèle de terrain..." },
            { icon: "dimension", label: "Dimension" },
            { icon: "comment", label: "Commentaire" },
            { icon: "points", label: "New Point Cloud" },
        ],
    },
    {
        title: "Modifier les objets",
        height: "h-[204px]",
        items: [
            { icon: "editTunnel", label: "Modifier la soufflerie..." },
            { icon: "sizeTunnel", label: "Redimensionner la soufflerie" },
            { icon: "orient", label: "Orienter le modèle principal" },
            { icon: "manip", label: "Manipuler le modèle" },
            { icon: "gizmo", label: "Manipulateur graphique" },
            { icon: "along", label: "Déplacer le long d'un vecteur..." },
            { icon: "split", label: "Découper le modèle" },
            { icon: "merge", label: "Fusionner les modèles" },
            { icon: "meshPen", label: "Modifier le maillage du modèle" },
            { icon: "ruler", label: "Measure Distance" },
        ],
    },
];

const displayOptions = [
    { label: "Activer la soufflerie", on: true },
    { label: "Afficher le modèle", on: true },
    { label: "Afficher le modèle simplifié", on: false },
    { label: "Afficher la légende", on: true },
    { label: "Show Point Clouds", on: true },
    { label: "Show Point Probes", on: true },
];

function TaskGroup({ title, children }: { title: string; children: ReactNode }) {
    return (
        <section className="border border-[#cdd2e2] bg-[#fafaff]">
            <h3 className="flex h-[19px] items-center justify-between bg-linear-to-b from-[#f6f7fb] to-[#d3d7e6] pr-1.5 pl-[3px] text-[#555]">
                {title}
                <svg viewBox="0 0 8 5" className="h-[5px] w-2" aria-hidden="true">
                    <path d="M0 0h8L4 5z" fill="#777" />
                </svg>
            </h3>
            {children}
        </section>
    );
}

function TaskBar() {
    return (
        <aside className="flex w-[255px] shrink-0 flex-col border-l-2 border-[#777] bg-[#f0f0f0] pl-1">
            <DockHeader title="Barre des tâches - Modèle" />
            <div className="flex min-h-0 flex-1 flex-col gap-[3px] bg-white pt-[5px] pr-px pl-0.5 text-[11px]">
                {taskGroups.map((group) => (
                    <TaskGroup key={group.title} title={group.title}>
                        <ul className={clsx("grid auto-rows-fr", group.height)}>
                            {group.items.map((item: { icon: string; label: string; current?: boolean; framed?: boolean }) => (
                                <li key={item.label} className="relative flex min-h-0">
                                    <button
                                        type="button"
                                        className={clsx(
                                            "flex flex-1 items-center gap-1.5 pr-1.5 pl-[3px] text-left whitespace-nowrap",
                                            item.current && "text-[12px] font-bold",
                                        )}
                                    >
                                        <Icon name={item.icon} className="size-[17px]" />
                                        <span className="flex-1">{item.label}</span>
                                        {item.current && (
                                            <svg viewBox="0 0 5 8" className="h-2 w-[5px]" aria-hidden="true">
                                                <path d="M5 0v8L0 4z" fill="#101070" />
                                            </svg>
                                        )}
                                    </button>
                                    {item.framed && <Frame className="-inset-y-[3px] right-0 -left-[9px]" />}
                                </li>
                            ))}
                        </ul>
                    </TaskGroup>
                ))}
                <TaskGroup title="Options d'affichage">
                    <ul className="grid h-[122px] auto-rows-fr">
                        {displayOptions.map((option, i) => (
                            <li key={option.label} className="flex min-h-0 items-center pl-1">
                                <span className="grid place-items-center">
                                    <input
                                        id={`option-${i}`}
                                        type="checkbox"
                                        defaultChecked={option.on}
                                        className="peer size-[15px] appearance-none border border-[#3c6cc0] bg-linear-to-br from-[#dcdcda] to-white [grid-area:1/1]"
                                    />
                                    <svg viewBox="0 0 10 10" className="pointer-events-none hidden size-[9px] [grid-area:1/1] peer-checked:block">
                                        <path d="M1 5l3 3L9 2" fill="none" stroke="#188018" strokeWidth="2.200" />
                                    </svg>
                                </span>
                                <label htmlFor={`option-${i}`} className="flex-1 pl-[7px]">
                                    {option.label}
                                </label>
                            </li>
                        ))}
                    </ul>
                </TaskGroup>
            </div>
            <div role="tablist" className="flex h-[25px] shrink-0 items-start border-t-2 border-[#777]">
                <Tab icon="tools" label="Barre des tâches" active />
                <Tab icon="cut" label="Découpe" />
            </div>
        </aside>
    );
}

function StatusBar() {
    return (
        <footer className="flex h-6 shrink-0 justify-end border-t border-[#d8d8d8] bg-[#f0f0f0] pt-px">
            <span className="w-[11px] border-l border-[#d0d0d0]" />
            <span className="w-[106px] border-l border-[#d0d0d0]" />
            <span className="w-[57px] border-l border-[#d0d0d0]" />
            <span className="w-[85px] border-l border-[#d0d0d0]" />
            <span className="w-[85px] border-l border-[#d0d0d0]" />
            <span className="flex w-[93px] items-end justify-end border-l border-[#d0d0d0] p-0.5">
                <svg viewBox="0 0 10 10" className="size-2.5" aria-hidden="true">
                    <path d="M8 0h2v2H8zM4 4h2v2H4zM8 4h2v2H8zM0 8h2v2H0zM4 8h2v2H4zM8 8h2v2H8z" fill="#b0b0b0" />
                </svg>
            </span>
        </footer>
    );
}

export default function App() {
    return (
        <div className="flex h-screen flex-col overflow-hidden border-x border-b border-[#1a7fd4] bg-[#f0f0f0] font-['Open_Sans','Noto_Sans',sans-serif] text-black">
            <TitleBar />
            <MenuBar />
            <Toolbar />
            <div className="flex min-h-0 flex-1">
                <Navigator />
                <Viewport />
                <TaskBar />
            </div>
            <StatusBar />
        </div>
    );
}
